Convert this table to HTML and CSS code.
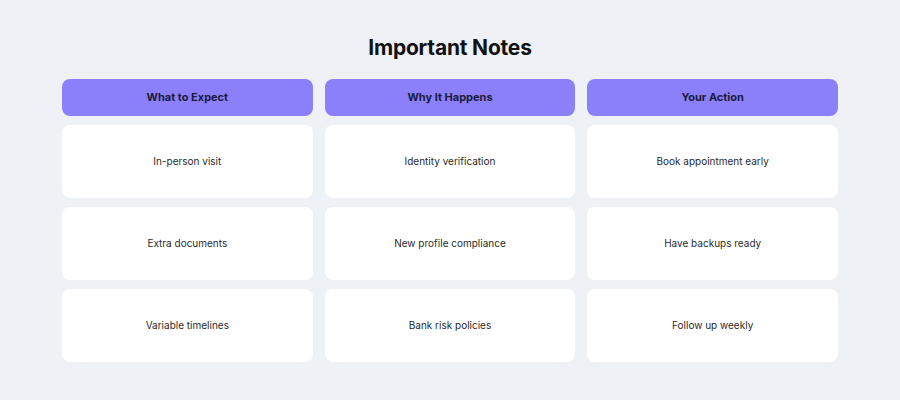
FILE: index.html
```html
<!DOCTYPE html>
<html>
<head>
<meta charset="utf-8">
<link rel="stylesheet" href="styles.css">
</head>
<body>
<div class="page">
  <h1 class="title">Important Notes</h1>
  <div class="grid">
    <div class="head">What to Expect</div>
    <div class="head">Why It Happens</div>
    <div class="head">Your Action</div>
    <div class="cell">In-person visit</div>
    <div class="cell">Identity verification</div>
    <div class="cell">Book appointment early</div>
    <div class="cell">Extra documents</div>
    <div class="cell">New profile compliance</div>
    <div class="cell">Have backups ready</div>
    <div class="cell">Variable timelines</div>
    <div class="cell">Bank risk policies</div>
    <div class="cell">Follow up weekly</div>
  </div>
</div>
</body>
</html>
```
FILE: styles.css
```css
html, body {
  margin: 0;
  padding: 0;
  background: #eef2f7;
  font-family: Inter, "Noto Sans", sans-serif;
}
.page {
  width: 900px;
  height: 400px;
  padding: 36px 62px 0;
  box-sizing: border-box;
}
.title {
  margin: 0;
  text-align: center;
  font-size: 21px;
  font-weight: 700;
  color: #111;
  line-height: 24px;
  letter-spacing: -0.2px;
}
.grid {
  margin-top: 19px;
  display: grid;
  grid-template-columns: repeat(3, 1fr);
  grid-template-rows: 37px 73px 73px 73px;
  column-gap: 12px;
  row-gap: 9px;
}
.head {
  background: #8b80f9;
  border-radius: 8px;
  display: flex;
  align-items: center;
  justify-content: center;
  font-size: 11px;
  font-weight: 700;
  color: #1a1a3c;
  padding-bottom: 2px;
}
.cell {
  background: #fff;
  border-radius: 8px;
  display: flex;
  align-items: center;
  justify-content: center;
  font-size: 10px;
  color: #2a2a2a;
  padding-bottom: 2px;
}
```
